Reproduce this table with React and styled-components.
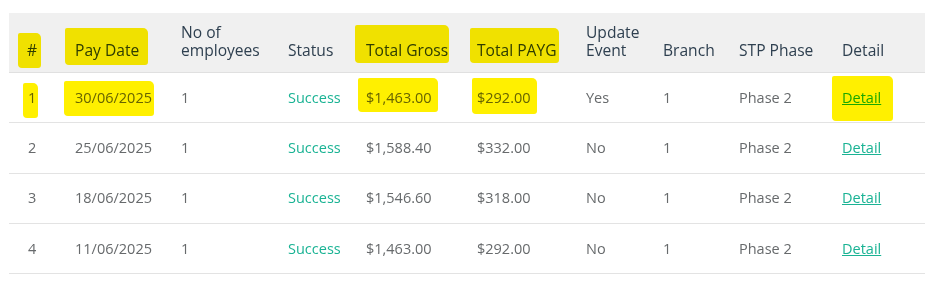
import React from 'react';
import styled, { createGlobalStyle } from 'styled-components';

const GlobalStyle = createGlobalStyle`
    body {
        margin: 0;
        background: #ffffff;
        font-family: "Open Sans", "Liberation Sans", sans-serif;
    }
`;

const columns = [
    { key: 'idx', label: '#', width: 56 },
    { key: 'date', label: 'Pay Date', width: 106 },
    { key: 'emp', label: ['No of', 'employees'], width: 107 },
    { key: 'status', label: 'Status', width: 78 },
    { key: 'gross', label: 'Total Gross', width: 111 },
    { key: 'payg', label: 'Total PAYG', width: 109 },
    { key: 'update', label: ['Update', 'Event'], width: 77 },
    { key: 'branch', label: 'Branch', width: 76 },
    { key: 'phase', label: 'STP Phase', width: 103 },
    { key: 'detail', label: 'Detail', width: 93 },
];

// highlighter strokes drawn over the screenshot: [top, right, bottom, left]
const headMarks = {
    idx: [-8, -4, -9, -9],
    date: [-13, -9, -6, -10],
    gross: [-16, -1, -4, -11],
    payg: [-13, -3, -4, -7],
};

const rows = [
    { idx: 1, date: '30/06/2025', emp: 1, gross: '$1,463.00', payg: '$292.00', update: 'Yes' },
    { idx: 2, date: '25/06/2025', emp: 1, gross: '$1,588.40', payg: '$332.00', update: 'No' },
    { idx: 3, date: '18/06/2025', emp: 1, gross: '$1,546.60', payg: '$318.00', update: 'No' },
    { idx: 4, date: '11/06/2025', emp: 1, gross: '$1,463.00', payg: '$292.00', update: 'No' },
];

const firstRowMarks = {
    idx: [-5, -2, -10, -5],
    date: [-7, -2, -8, -11],
    gross: [-10, -6, -4, -8],
    payg: [-10, -6, -6, -5],
    detail: [-12, -12, -13, -10],
};

function Marked({ mark, children }) {
    if (!mark) return children;
    const [t, r, b, l] = mark;
    return (
        <Mark $t={t} $r={r} $b={b} $l={l}>
            {children}
        </Mark>
    );
}

function App() {
    return (
        <Page>
            <GlobalStyle />
            <Table>
                <colgroup>
                    {columns.map((c) => (
                        <col key={c.key} style={{ width: c.width }} />
                    ))}
                </colgroup>
                <thead>
                    <tr>
                        {columns.map((c) => (
                            <Th key={c.key} $first={c.key === 'idx'}>
                                <Marked mark={headMarks[c.key]}>
                                    {Array.isArray(c.label) ? (
                                        <>
                                            {c.label[0]}
                                            <br />
                                            {c.label[1]}
                                        </>
                                    ) : (
                                        c.label
                                    )}
                                </Marked>
                            </Th>
                        ))}
                    </tr>
                </thead>
                <tbody>
                    {rows.map((row, i) => {
                        const marks = i === 0 ? firstRowMarks : {};
                        return (
                            <tr key={row.idx}>
                                <Td $first><Marked mark={marks.idx}>{row.idx}</Marked></Td>
                                <Td><Marked mark={marks.date}>{row.date}</Marked></Td>
                                <Td>{row.emp}</Td>
                                <Td><Status>Success</Status></Td>
                                <Td><Marked mark={marks.gross}>{row.gross}</Marked></Td>
                                <Td><Marked mark={marks.payg}>{row.payg}</Marked></Td>
                                <Td>{row.update}</Td>
                                <Td>1</Td>
                                <Td>Phase 2</Td>
                                <Td>
                                    <Marked mark={marks.detail}>
                                        <DetailLink href="#">Detail</DetailLink>
                                    </Marked>
                                </Td>
                            </tr>
                        );
                    })}
                </tbody>
            </Table>
        </Page>
    );
}

const Page = styled.div`
    padding: 13px 0 0 9px;
    width: 916px;
`;

const Table = styled.table`
    width: 916px;
    table-layout: fixed;
    border-collapse: collapse;
    font-size: 14.5px;
    line-height: 20px;
`;

const Th = styled.th`
    background: #f0f0f0;
    color: #2f4050;
    font-size: 15.6px;
    line-height: 18px;
    font-weight: 400;
    text-align: left;
    vertical-align: bottom;
    padding: 10px 8px 13px ${(p) => (p.$first ? '18px' : '10px')};
    border-bottom: 1px solid #e0e0e0;
    white-space: nowrap;
`;

const Td = styled.td`
    color: #676a6c;
    height: 49.34px;
    padding: 0 8px 0 ${(p) => (p.$first ? '19px' : '10px')};
    vertical-align: middle;
    border-bottom: 1px solid #e3e3e3;
    white-space: nowrap;
`;

const Status = styled.span`
    color: #1ab394;
`;

const DetailLink = styled.a`
    color: #1ab394;
    text-decoration: underline;
`;

const Mark = styled.span`
    position: relative;
    display: inline-block;
    &::after {
        content: '';
        position: absolute;
        top: ${(p) => p.$t}px;
        right: ${(p) => p.$r}px;
        bottom: ${(p) => p.$b}px;
        left: ${(p) => p.$l}px;
        background: #fff000;
        mix-blend-mode: multiply;
        border-radius: 2px 5px 3px 4px;
        pointer-events: none;
    }
`;

export default App;
